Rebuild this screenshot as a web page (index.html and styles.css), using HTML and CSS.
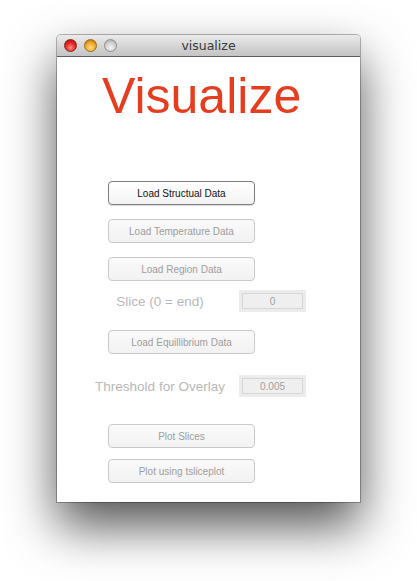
FILE: index.html
```html
<!DOCTYPE html>
<html>
<head>
<meta charset="utf-8">
<link rel="stylesheet" href="styles.css">
</head>
<body>
<div class="window">
  <div class="titlebar">
    <div class="lights">
      <span class="light red"></span>
      <span class="light orange"></span>
      <span class="light grey"></span>
    </div>
    <div class="wtitle">visualize</div>
  </div>
  <div class="content">
    <div class="heading">Visualize</div>
    <div class="btn active b1">Load Structual Data</div>
    <div class="btn b2">Load Temperature Data</div>
    <div class="btn b2">Load Region Data</div>
    <div class="row r-slice">
      <div class="label">Slice (0 = end)</div>
      <div class="field"><div class="field-in">0</div></div>
    </div>
    <div class="btn b-equil">Load Equillibrium Data</div>
    <div class="row r-thresh">
      <div class="label">Threshold for Overlay</div>
      <div class="field"><div class="field-in">0.005</div></div>
    </div>
    <div class="btn b-plot">Plot Slices</div>
    <div class="btn b-ts">Plot using tsliceplot</div>
  </div>
</div>
</body>
</html>
```
FILE: styles.css
```css
html, body {
  margin: 0;
  padding: 0;
  background: #ffffff;
}
body {
  width: 417px;
  height: 581px;
  overflow: hidden;
  padding-top: 35px;
  box-sizing: border-box;
  font-family: "Liberation Sans", Arial, sans-serif;
}
.window {
  margin-left: 57px;
  width: 303px;
  border-radius: 4px 4px 0 0;
  box-shadow: 0 24px 50px rgba(0,0,0,0.68), 0 0 0 1px rgba(0,0,0,0.28);
  background: #ffffff;
}
.titlebar {
  height: 21px;
  border-bottom: 1px solid #5e5e5e;
  border-radius: 4px 4px 0 0;
  background: linear-gradient(#ebebeb, #d2d2d2 60%, #c4c4c4);
  display: flex;
  align-items: center;
  position: relative;
}
.lights {
  display: flex;
  gap: 7px;
  padding-left: 7px;
}
.light {
  width: 13px;
  height: 13px;
  border-radius: 50%;
  box-sizing: border-box;
}
.red {
  background: radial-gradient(circle at 50% 70%, #ff8a86 0%, #e2221d 55%, #9c1010 100%);
  border: 1px solid #8c1d1d;
}
.orange {
  background: radial-gradient(circle at 50% 70%, #ffe08a 0%, #f0a51e 55%, #a8640c 100%);
  border: 1px solid #9a6a1d;
}
.grey {
  background: radial-gradient(circle at 50% 70%, #f4f4f4 0%, #cfcfcf 55%, #9a9a9a 100%);
  border: 1px solid #8e8e8e;
}
.wtitle {
  position: absolute;
  left: 0;
  right: 0;
  top: 3px;
  text-align: center;
  font-family: "DejaVu Sans", sans-serif;
  font-size: 12.5px;
  color: #3a3a3a;
  pointer-events: none;
}
.content {
  height: 445px;
  display: flex;
  flex-direction: column;
  align-items: flex-start;
  box-sizing: border-box;
  padding-top: 11px;
}
.heading {
  margin-left: 45px;
  font-size: 50px;
  line-height: 56px;
  color: #e63d1f;
}
.btn {
  margin-left: 51px;
  width: 147px;
  height: 24px;
  box-sizing: border-box;
  border: 1px solid #c9c9c9;
  border-radius: 4px;
  background: linear-gradient(#fafafa, #f2f2f2);
  color: #9d9d9d;
  font-size: 10px;
  display: flex;
  align-items: center;
  justify-content: center;
}
.btn.active {
  border-color: #7d7d7d;
  color: #111111;
  background: linear-gradient(#ffffff, #f3f3f3);
  box-shadow: 0 1px 1px rgba(0,0,0,0.15);
}
.b1 { margin-top: 57px; }
.b2 { margin-top: 14px; }
.b-equil { margin-top: 18px; }
.b-plot { margin-top: 27px; }
.b-ts { margin-top: 11px; }
.row {
  display: flex;
  align-items: center;
  margin-left: 35px;
}
.r-slice { margin-top: 9px; }
.r-thresh { margin-top: 21px; }
.label {
  width: 136px;
  text-align: center;
  font-size: 13.5px;
  color: #b8b8b8;
}
.field {
  margin-left: 11px;
  width: 67px;
  height: 22px;
  box-sizing: border-box;
  padding: 3px;
  background: #ececec;
}
.field-in {
  height: 100%;
  box-sizing: border-box;
  border: 1px solid #d6d6d6;
  background: #efefef;
  color: #a0a0a0;
  font-size: 10px;
  display: flex;
  align-items: center;
  justify-content: center;
}
```
